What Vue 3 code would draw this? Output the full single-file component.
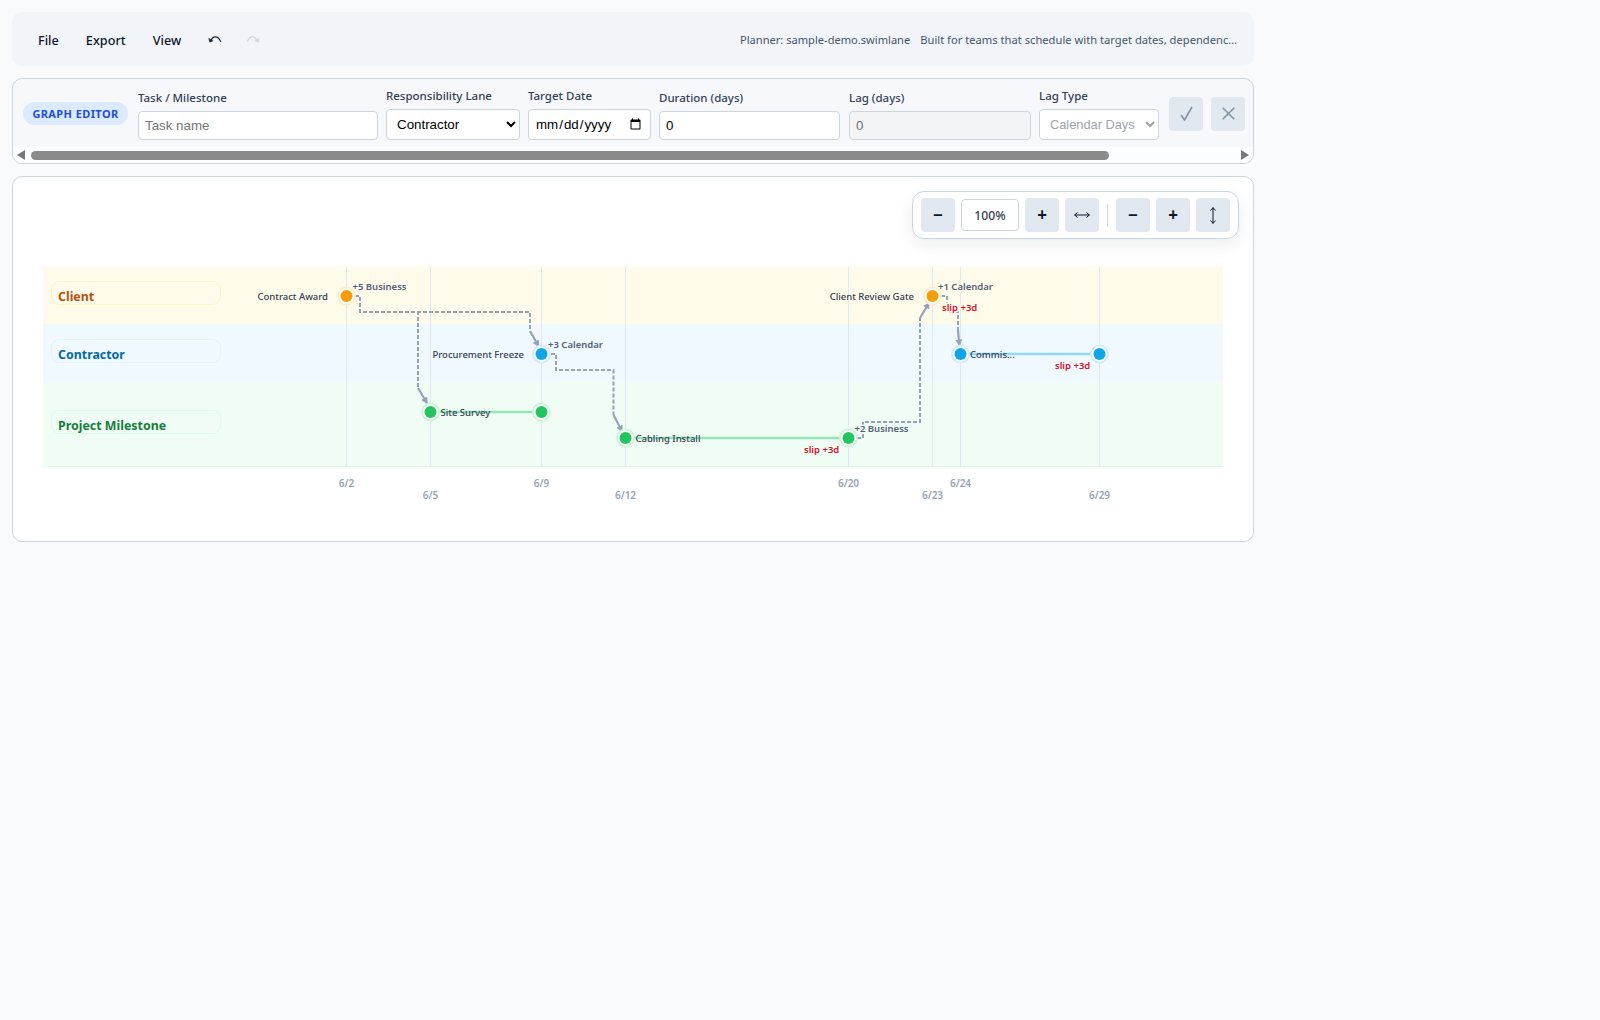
<template>
  <div class="page">
    <header class="topbar">
      <nav class="menu">
        <button v-for="m in menus" :key="m" class="menu-btn">{{ m }}</button>
        <button class="hist-btn" aria-label="Undo">
          <svg width="14" height="8" viewBox="0 0 14 8"><path d="M3 6 C4.5 0.8 10 0.2 12.8 6.8" fill="none" stroke="#1e293b" stroke-width="1.3"/><path d="M0.3 2.8 L1.5 7.6 L5.6 6 Z" fill="#1e293b"/></svg>
        </button>
        <button class="hist-btn" aria-label="Redo">
          <svg width="14" height="8" viewBox="0 0 14 8"><path d="M11 6 C9.5 0.8 4 0.2 1.2 6.8" fill="none" stroke="#cbd5e1" stroke-width="1.3"/><path d="M13.7 2.8 L12.5 7.6 L8.4 6 Z" fill="#cbd5e1"/></svg>
        </button>
      </nav>
      <div class="meta">
        <span class="planner">Planner: sample-demo.swimlane</span>
        <span class="tagline">Built for teams that schedule with target dates, dependencies, lag rules and slip tracking.</span>
      </div>
    </header>

    <section class="editor">
      <div class="editor-row">
        <span class="pill">GRAPH EDITOR</span>
        <label class="field f-task">
          <span>Task / Milestone</span>
          <input type="text" placeholder="Task name" />
        </label>
        <label class="field f-lane">
          <span>Responsibility Lane</span>
          <select><option>Contractor</option><option>Client</option><option>Project Milestone</option></select>
        </label>
        <label class="field f-date">
          <span>Target Date</span>
          <input type="date" />
        </label>
        <label class="field f-dur">
          <span>Duration (days)</span>
          <input type="number" value="0" />
        </label>
        <label class="field f-lag">
          <span>Lag (days)</span>
          <input type="number" value="0" disabled />
        </label>
        <label class="field f-type">
          <span>Lag Type</span>
          <select disabled><option>Calendar Days</option></select>
        </label>
        <button class="icon-btn apply" aria-label="Apply">
          <svg width="13" height="15" viewBox="0 0 13 15"><path d="M1 9 L4.5 14 L12 1" fill="none" stroke="#8492a6" stroke-width="1.6"/></svg>
        </button>
        <button class="icon-btn" aria-label="Cancel">
          <svg width="13" height="13" viewBox="0 0 13 13"><path d="M0.7 0.7 L12.3 12.3 M12.3 0.7 L0.7 12.3" fill="none" stroke="#8492a6" stroke-width="1.6"/></svg>
        </button>
      </div>
      <div class="scrollbar">
        <i class="arrow left"></i>
        <div class="track"><div class="thumb"></div></div>
        <i class="arrow right"></i>
      </div>
    </section>

    <section class="chart">
      <div class="zoombar">
        <button class="zb">−</button>
        <div class="zoom-value">100%</div>
        <button class="zb">+</button>
        <button class="zb" aria-label="Fit width">
          <svg width="16" height="8" viewBox="0 0 16 8"><path d="M0.5 4 H15.5 M3.5 1.5 L0.7 4 L3.5 6.5 M12.5 1.5 L15.3 4 L12.5 6.5" fill="none" stroke="#0f172a" stroke-width="1"/></svg>
        </button>
        <span class="sep"></span>
        <button class="zb">−</button>
        <button class="zb">+</button>
        <button class="zb" aria-label="Fit height">
          <svg width="8" height="17" viewBox="0 0 8 17"><path d="M4 0.5 V16.5 M1.5 3.5 L4 0.7 L6.5 3.5 M1.5 13.5 L4 16.3 L6.5 13.5" fill="none" stroke="#0f172a" stroke-width="1"/></svg>
        </button>
      </div>

      <svg class="graph" width="1180" height="240" viewBox="43 266 1180 240">
        <defs>
          <marker id="arrow" markerUnits="userSpaceOnUse" markerWidth="8" markerHeight="8" refX="5.5" refY="4" orient="auto">
            <path d="M0 0.5 L7 4 L0 7.5 Z" fill="#94a3b8" />
          </marker>
        </defs>

        <g v-for="lane in lanes" :key="lane.name">
          <rect x="43" :y="lane.y" width="1180" :height="lane.h" :fill="lane.bg" />
          <line x1="43" x2="1223" :y1="lane.y + lane.h + 0.5" :y2="lane.y + lane.h + 0.5" :stroke="lane.line" />
          <rect x="51.5" :y="lane.labelY + 0.5" width="169" height="23" rx="8" :fill="lane.bg" :stroke="lane.line" />
          <text x="58" :y="lane.labelY + 20" class="lane-name" :fill="lane.text">{{ lane.name }}</text>
        </g>

        <g v-for="t in ticks" :key="t.label">
          <line :x1="t.x" :x2="t.x" y1="267" y2="467" class="grid" />
          <text :x="t.x" :y="t.y" class="tick" text-anchor="middle">{{ t.label }}</text>
        </g>

        <line v-for="b in bars" :key="b.x1" :x1="b.x1" :x2="b.x2" :y1="b.y" :y2="b.y" :stroke="b.color" stroke-width="2.4" />

        <g v-for="(d, i) in deps" :key="i">
          <polyline :points="d.route" class="dep" />
          <polyline :points="d.tip" class="dep-tip" marker-end="url(#arrow)" />
        </g>

        <g v-for="n in nodes" :key="n.x + '-' + n.y">
          <circle :cx="n.x" :cy="n.y" r="8.6" fill="#fff" :stroke="n.halo" stroke-width="1.6" />
          <circle :cx="n.x" :cy="n.y" r="6" :fill="n.color" />
        </g>

        <text v-for="l in taskLabels" :key="l.t" :x="l.x" :y="l.y" class="task" :text-anchor="l.end ? 'end' : 'start'">{{ l.t }}</text>
        <text v-for="l in lagLabels" :key="l.t" :x="l.x" :y="l.y" class="lag" :stroke="l.bg">{{ l.t }}</text>
        <text v-for="s in slips" :key="s.x" :x="s.x" :y="s.y" class="slip" :stroke="s.bg">slip +3d</text>
      </svg>
    </section>
  </div>
</template>

<script setup>
const menus = ['File', 'Export', 'View']

const lanes = [
  { name: 'Client', y: 266, h: 58, labelY: 281, bg: '#fffbeb', line: '#fef3c7', text: '#b45309' },
  { name: 'Contractor', y: 324, h: 58, labelY: 339, bg: '#f0f9ff', line: '#e0f2fe', text: '#0369a1' },
  { name: 'Project Milestone', y: 382, h: 84, labelY: 410, bg: '#f0fdf4', line: '#dcfce7', text: '#15803d' }
]

const ticks = [
  { label: '6/2', x: 346.5, y: 487 },
  { label: '6/5', x: 430.5, y: 499 },
  { label: '6/9', x: 541.5, y: 487 },
  { label: '6/12', x: 625.5, y: 499 },
  { label: '6/20', x: 848.5, y: 487 },
  { label: '6/23', x: 932.5, y: 499 },
  { label: '6/24', x: 960.5, y: 487 },
  { label: '6/29', x: 1099.5, y: 499 }
]

const bars = [
  { x1: 430, x2: 542, y: 412, color: '#93e6b3' },
  { x1: 625, x2: 849, y: 438, color: '#93e6b3' },
  { x1: 960, x2: 1100, y: 354, color: '#93d8f7' }
]

// dependency routes, page coordinates. second route starts where the first one's dash phase lines up
const deps = [
  { route: '355,296 360,296 360,312 418,312 418,388', tip: '418,388 427,403' },
  { route: '417,312 530,312 530,331', tip: '530,331 538.5,346' },
  { route: '551,354 556,354 556,370 613.5,370 613.5,415', tip: '613.5,415 622,431' },
  { route: '857,438 863,438 863,422 920,422 920,318', tip: '920,318 929,303' },
  { route: '941,296 947,296 947,312 958,312 958,330', tip: '958,330 959.3,345' }
]

const nodes = [
  { x: 346.5, y: 296, color: '#f59e0b', halo: '#fdeccb' },
  { x: 932.5, y: 296, color: '#f59e0b', halo: '#fdeccb' },
  { x: 541.5, y: 354, color: '#0ea5e9', halo: '#c9ecfb' },
  { x: 960.5, y: 354, color: '#0ea5e9', halo: '#c9ecfb' },
  { x: 1099.5, y: 354, color: '#0ea5e9', halo: '#c9ecfb' },
  { x: 430.5, y: 412, color: '#22c55e', halo: '#c8f2d6' },
  { x: 541.5, y: 412, color: '#22c55e', halo: '#c8f2d6' },
  { x: 625.5, y: 438, color: '#22c55e', halo: '#c8f2d6' },
  { x: 848.5, y: 438, color: '#22c55e', halo: '#c8f2d6' }
]

const taskLabels = [
  { t: 'Contract Award', x: 328, y: 300, end: true },
  { t: 'Procurement Freeze', x: 524, y: 358, end: true },
  { t: 'Client Review Gate', x: 914, y: 300, end: true },
  { t: 'Site Survey', x: 440.5, y: 416 },
  { t: 'Cabling Install', x: 635.5, y: 442 },
  { t: 'Commis...', x: 970, y: 358 }
]

const lagLabels = [
  { t: '+5 Business', x: 352.5, y: 290, bg: '#fffbeb' },
  { t: '+3 Calendar', x: 548, y: 348, bg: '#f0f9ff' },
  { t: '+1 Calendar', x: 938, y: 290, bg: '#fffbeb' },
  { t: '+2 Business', x: 854.5, y: 432, bg: '#f0fdf4' }
]

const slips = [
  { x: 942, y: 311, bg: '#fffbeb' },
  { x: 1055, y: 369, bg: '#f0f9ff' },
  { x: 804, y: 453, bg: '#f0fdf4' }
]
</script>

<style>
body {
  margin: 0;
  background: #f8fafc;
}
</style>

<style scoped>
.page {
  box-sizing: border-box;
  min-height: 1020px;
  padding: 12px;
  width: 1266px;
  font-family: 'Noto Sans', 'Open Sans', sans-serif;
  color: #1e293b;
}

.topbar {
  display: flex;
  justify-content: space-between;
  align-items: center;
  height: 54px;
  padding: 0 16px 0 14px;
  background: #f1f5f9;
  border-radius: 10px;
}
.menu {
  display: flex;
  align-items: center;
}
.menu-btn {
  border: none;
  background: none;
  font: 500 12.7px 'Noto Sans', sans-serif;
  color: #0f172a;
  padding: 8px 12px 6px;
  margin-right: 3px;
}
.hist-btn {
  border: none;
  background: none;
  padding: 0;
  width: 38px;
  height: 24px;
  margin-top: -2px;
}
.meta {
  display: flex;
  gap: 10px;
  font-size: 11.1px;
  color: #475569;
  width: 498px;
  white-space: nowrap;
}
.tagline {
  flex: 1;
  min-width: 0;
  font-size: 11.18px;
  overflow: hidden;
  text-overflow: ellipsis;
}

.editor {
  margin-top: 12px;
  height: 86px;
  box-sizing: border-box;
  background: #f6f8fc;
  border: 1px solid #cbd5e1;
  border-radius: 10px;
  padding-top: 10px;
  overflow: hidden;
}
.editor-row {
  display: flex;
  align-items: center;
  gap: 8px;
  height: 51px;
  padding-left: 10px;
}
.pill {
  box-sizing: border-box;
  width: 105px;
  margin-right: 2px;
  margin-bottom: 2px;
  height: 23px;
  line-height: 23px;
  text-align: center;
  background: #dbeafe;
  color: #1d4ed8;
  border-radius: 12px;
  font-size: 11px;
  font-weight: 700;
  letter-spacing: 0.4px;
}
.field {
  display: flex;
  flex-direction: column;
  align-self: flex-end;
  gap: 5px;
  font-size: 11.5px;
  font-weight: 500;
  color: #334155;
}
.field span {
  line-height: 16px;
  white-space: nowrap;
}
.field input,
.field select {
  box-sizing: border-box;
  width: 100%;
  height: 29px;
  border: 1px solid #cbd5e1;
  border-radius: 4px;
  background: #fff;
  padding: 0 6px;
  font: 13.33px 'Liberation Sans', sans-serif;
  color: #000;
}
.field select,
.field input[type='date'] {
  height: 31px;
  padding-left: 6px;
}
.field input::placeholder {
  color: #757575;
}
.field input:disabled {
  background: #f3f4f6;
  color: #6b7280;
}
.field select:disabled {
  color: #9ca3af;
  background: #fff;
  opacity: 1;
  font-size: 12.8px;
  padding-right: 0;
}
.f-task { width: 240px; }
.f-lane { width: 134px; }
.f-date { width: 123px; }
.f-dur { width: 181px; }
.f-lag { width: 182px; margin-left: 1px; }
.f-type { width: 120px; }

.icon-btn {
  width: 34px;
  height: 34px;
  margin-bottom: 2px;
  border: none;
  border-radius: 4px;
  background: #e2e8f0;
  padding: 0;
  display: flex;
  align-items: center;
  justify-content: center;
}
.icon-btn.apply { margin-left: 2px; }

.scrollbar {
  display: flex;
  align-items: center;
  height: 16px;
  margin-top: 7px;
  padding: 0 4px;
  background: #fcfdfe;
}
.arrow {
  width: 0;
  height: 0;
  border-top: 5px solid transparent;
  border-bottom: 5px solid transparent;
}
.arrow.left { border-right: 8px solid #777; }
.arrow.right { border-left: 8px solid #777; }
.track {
  flex: 1;
  padding: 0 6px;
}
.thumb {
  width: 1078px;
  height: 9px;
  border-radius: 5px;
  background: #8a8a8a;
}

.chart {
  position: relative;
  box-sizing: border-box;
  margin-top: 12px;
  height: 366px;
  background: #fff;
  border: 1px solid #cbd5e1;
  border-radius: 10px;
  padding: 89px 30px 0;
}
.zoombar {
  position: absolute;
  top: 14px;
  right: 14px;
  display: flex;
  align-items: center;
  gap: 6px;
  padding: 6px 8px;
  height: 34px;
  background: #fff;
  border: 1px solid #cbd5e1;
  border-radius: 12px;
  box-shadow: 0 6px 16px rgba(15, 23, 42, 0.08);
}
.zb {
  display: flex;
  align-items: center;
  justify-content: center;
  width: 34px;
  height: 34px;
  border: none;
  border-radius: 4px;
  background: #e2e8f0;
  color: #0f172a;
  padding: 0 0 2px;
  font: 700 17px 'Noto Sans', sans-serif;
}
.zb svg {
  margin-top: 2px;
}
.zoom-value {
  box-sizing: border-box;
  width: 58px;
  height: 32px;
  line-height: 32px;
  text-align: center;
  border: 1px solid #cbd5e1;
  border-radius: 4px;
  font-size: 12.2px;
  font-weight: 500;
  color: #334155;
}
.sep {
  width: 1px;
  height: 23px;
  background: #cbd5e1;
  margin: 0 2px;
}

.graph {
  display: block;
}
.lane-name {
  font-size: 12.4px;
  font-weight: 700;
}
.grid {
  stroke: #e2e8f0;
  stroke-width: 1;
}
.tick {
  font-size: 10px;
  font-weight: 600;
  fill: #94a3b8;
}
.dep {
  fill: none;
  stroke: #94a3b8;
  stroke-width: 2;
  stroke-dasharray: 4 2;
}
.dep-tip {
  fill: none;
  stroke: #94a3b8;
  stroke-width: 2.2;
}
.task {
  font-size: 9.5px;
  font-weight: 500;
  fill: #334155;
}
.lag {
  font-size: 9.5px;
  font-weight: 600;
  fill: #526079;
  paint-order: stroke;
  stroke-width: 3;
}
.slip {
  font-size: 9.5px;
  font-weight: 600;
  fill: #dc0f2a;
  paint-order: stroke;
  stroke-width: 3;
}
</style>
